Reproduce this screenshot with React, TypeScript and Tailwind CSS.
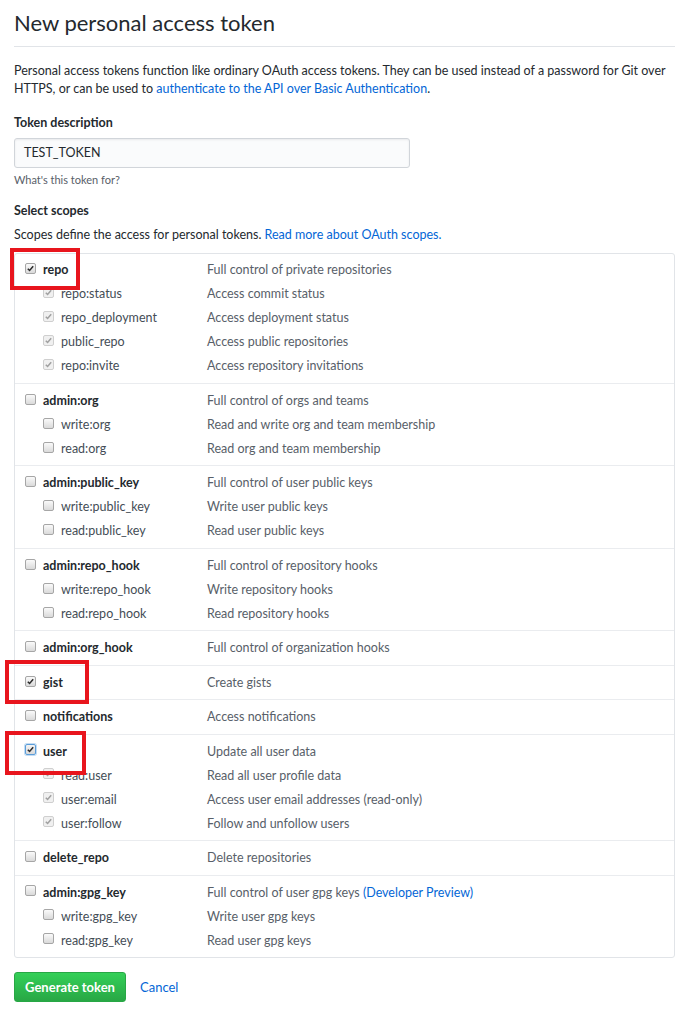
import React from "react";

type Scope = {
  name: string;
  desc: React.ReactNode;
  checked: boolean;
  focus?: boolean;
  children?: { name: string; desc: string; checked: boolean }[];
};

const scopes: Scope[] = [
  {
    name: "repo",
    desc: "Full control of private repositories",
    checked: true,
    children: [
      { name: "repo:status", desc: "Access commit status", checked: true },
      { name: "repo_deployment", desc: "Access deployment status", checked: true },
      { name: "public_repo", desc: "Access public repositories", checked: true },
      { name: "repo:invite", desc: "Access repository invitations", checked: true },
    ],
  },
  {
    name: "admin:org",
    desc: "Full control of orgs and teams",
    checked: false,
    children: [
      { name: "write:org", desc: "Read and write org and team membership", checked: false },
      { name: "read:org", desc: "Read org and team membership", checked: false },
    ],
  },
  {
    name: "admin:public_key",
    desc: "Full control of user public keys",
    checked: false,
    children: [
      { name: "write:public_key", desc: "Write user public keys", checked: false },
      { name: "read:public_key", desc: "Read user public keys", checked: false },
    ],
  },
  {
    name: "admin:repo_hook",
    desc: "Full control of repository hooks",
    checked: false,
    children: [
      { name: "write:repo_hook", desc: "Write repository hooks", checked: false },
      { name: "read:repo_hook", desc: "Read repository hooks", checked: false },
    ],
  },
  { name: "admin:org_hook", desc: "Full control of organization hooks", checked: false },
  { name: "gist", desc: "Create gists", checked: true },
  { name: "notifications", desc: "Access notifications", checked: false },
  {
    name: "user",
    desc: "Update all user data",
    checked: true,
    focus: true,
    children: [
      { name: "read:user", desc: "Read all user profile data", checked: true },
      { name: "user:email", desc: "Access user email addresses (read-only)", checked: true },
      { name: "user:follow", desc: "Follow and unfollow users", checked: true },
    ],
  },
  { name: "delete_repo", desc: "Delete repositories", checked: false },
  {
    name: "admin:gpg_key",
    desc: (
      <>
        Full control of user gpg keys{" "}
        <span className="text-[#0366d6]">(Developer Preview)</span>
      </>
    ),
    checked: false,
    children: [
      { name: "write:gpg_key", desc: "Write user gpg keys", checked: false },
      { name: "read:gpg_key", desc: "Read user gpg keys", checked: false },
    ],
  },
];

const Checkbox = ({
  checked,
  disabled = false,
  focus = false,
}: {
  checked: boolean;
  disabled?: boolean;
  focus?: boolean;
}) => (
  <span
    className={`relative inline-block h-[11px] w-[11px] shrink-0 rounded-[2px] border ${
      disabled
        ? "border-[#cfcfcf] bg-[#f0f0f0]"
        : focus
          ? "border-[#5b9dd9] bg-gradient-to-b from-[#f4f4f4] to-[#d9d9d9] shadow-[0_0_0_1px_#c3dcf3]"
          : "border-[#a6a6a6] bg-gradient-to-b from-[#fafafa] to-[#dadada]"
    }`}
  >
    {checked && (
      <svg viewBox="0 0 10 10" className="absolute left-0 top-0 h-[9px] w-[9px]">
        <path
          d="M2 5.2 L4 7.2 L8 2.6"
          fill="none"
          stroke={disabled ? "#a0a0a0" : "#2b2b2b"}
          strokeWidth="1.7"
        />
      </svg>
    )}
  </span>
);

const Row = ({
  name,
  desc,
  checked,
  sub = false,
  disabled = false,
  focus = false,
}: {
  name: string;
  desc: React.ReactNode;
  checked: boolean;
  sub?: boolean;
  disabled?: boolean;
  focus?: boolean;
}) => (
  <div className="flex h-[24px] items-center">
    <div className={`flex w-[192px] items-center ${sub ? "pl-[28px]" : "pl-[10px]"}`}>
      <span className="-mt-[4px] flex">
        <Checkbox checked={checked} disabled={disabled} focus={focus} />
      </span>
      <span className={`ml-[7px] ${sub ? "text-[#444d56]" : "font-bold text-[#24292e]"}`}>
        {name}
      </span>
    </div>
    <div className="text-[#586069]">{desc}</div>
  </div>
);

const RedBox = ({ className }: { className: string }) => (
  <div className={`pointer-events-none absolute border-4 border-[#e8151d] ${className}`} />
);

export default function App() {
  return (
    <div
      className="relative min-h-[1024px] bg-white pl-[14px] pr-[18px] pt-[8px] text-[12.5px] text-[#24292e]"
      style={{ fontFamily: 'Lato, "Open Sans", sans-serif' }}
    >
      <h1 className="border-b border-[#e1e4e8] pb-[8px] text-[22px] font-normal leading-[30px]">
        New personal access token
      </h1>

      <p className="mt-[15px] leading-[18px] text-[#24292e]">
        Personal access tokens function like ordinary OAuth access tokens. They can be used instead
        of a password for Git over HTTPS, or can be used to{" "}
        <span className="text-[#0366d6]">authenticate to the API over Basic Authentication</span>.
      </p>

      <div className="mt-[16px] font-bold leading-[18px]">Token description</div>
      <div className="mt-[6px] flex h-[30px] w-[396px] items-center rounded-[3px] border border-[#d1d5da] bg-[#fafbfc] px-[9px] shadow-[inset_0_1px_2px_rgba(27,31,35,0.075)]">
        TEST_TOKEN
      </div>
      <div className="mt-[4px] text-[11px] text-[#586069]">What&apos;s this token for?</div>

      <div className="mt-[13px] font-bold leading-[18px]">Select scopes</div>
      <p className="mt-[6px] leading-[18px]">
        Scopes define the access for personal tokens.{" "}
        <span className="text-[#0366d6]">Read more about OAuth scopes.</span>
      </p>

      <div className="mt-[9px] rounded-[3px] border border-[#e1e4e8] text-[12.5px]">
        {scopes.map((s, i) => (
          <div
            key={s.name}
            className={`pb-[4.4px] pt-[5.1px] ${i > 0 ? "border-t border-[#eaecef]" : ""}`}
          >
            <Row name={s.name} desc={s.desc} checked={s.checked} focus={s.focus} />
            {s.children?.map((c) => (
              <Row
                key={c.name}
                name={c.name}
                desc={c.desc}
                checked={c.checked}
                sub
                disabled={s.checked}
              />
            ))}
          </div>
        ))}
      </div>

      <div className="mt-[14px] flex items-center gap-[14px]">
        <button className="h-[30px] w-[112px] rounded-[3px] border border-[#28a745] bg-gradient-to-b from-[#34d058] to-[#28a745] text-[13px] font-bold text-white">
          Generate token
        </button>
        <span className="text-[13px] text-[#0366d6]">Cancel</span>
      </div>

      <RedBox className="left-[10px] top-[248px] h-[42px] w-[70px]" />
      <RedBox className="left-[5px] top-[660px] h-[44px] w-[84px]" />
      <RedBox className="left-[5px] top-[731px] h-[44px] w-[81px]" />
    </div>
  );
}
